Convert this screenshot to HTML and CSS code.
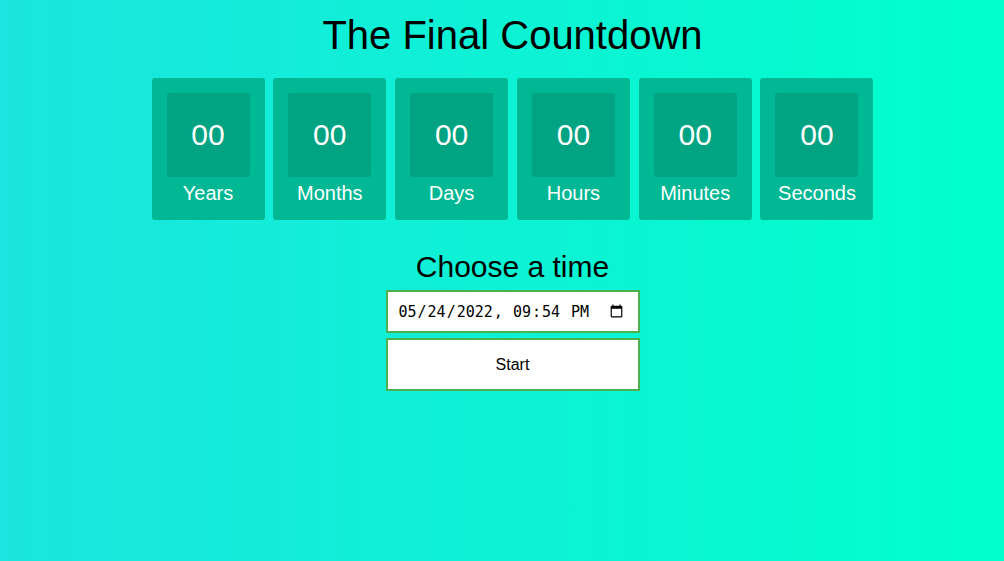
FILE: index.html
```html
<!DOCTYPE html>
<html lang="en">
<head>
<meta charset="utf-8">
<title>The Final Countdown</title>
<link rel="stylesheet" href="styles.css">
</head>
<body>
<main class="page">
  <h1 class="title">The Final Countdown</h1>
  <section class="timer">
    <div class="unit"><div class="value">00</div><div class="label">Years</div></div>
    <div class="unit"><div class="value">00</div><div class="label">Months</div></div>
    <div class="unit"><div class="value">00</div><div class="label">Days</div></div>
    <div class="unit"><div class="value">00</div><div class="label">Hours</div></div>
    <div class="unit"><div class="value">00</div><div class="label">Minutes</div></div>
    <div class="unit"><div class="value">00</div><div class="label">Seconds</div></div>
  </section>
  <section class="chooser">
    <h2 class="subtitle">Choose a time</h2>
    <input class="date-input" type="datetime-local" value="2022-05-24T21:54">
    <button class="start-btn" type="button">Start</button>
  </section>
</main>
</body>
</html>
```
FILE: styles.css
```css
html, body {
  margin: 0;
  padding: 0;
  height: 100%;
}
body {
  background: linear-gradient(to right, #1ae5de, #00ffcc);
  font-family: "Liberation Sans", Arial, sans-serif;
  color: #000;
}
.page {
  display: flex;
  flex-direction: column;
  align-items: center;
  padding-left: 21px;
}
.title {
  margin: 12px 0 0;
  font-size: 40px;
  font-weight: normal;
  line-height: 46px;
}
.timer {
  display: flex;
  gap: 8.8px;
  margin-top: 20px;
}
.unit {
  width: 113px;
  box-sizing: border-box;
  padding: 15px 15px 15px;
  background: #00b894;
  border-radius: 3px;
  display: flex;
  flex-direction: column;
  align-items: center;
}
.value {
  width: 83px;
  height: 84px;
  background: #00a382;
  border-radius: 2px;
  display: flex;
  align-items: center;
  justify-content: center;
  color: #fff;
  font-size: 30px;
}
.label {
  margin-top: 5px;
  color: #fff;
  font-size: 20px;
  line-height: 23px;
}
.chooser {
  display: flex;
  flex-direction: column;
  align-items: center;
  margin-top: 29px;
}
.subtitle {
  margin: 0 0 6px;
  font-size: 30px;
  font-weight: normal;
  line-height: 35px;
}
.date-input {
  width: 254px;
  height: 43px;
  box-sizing: border-box;
  border: 2px solid #4caf50;
  background: #fff;
  padding: 0 12px 0 10px;
  font-family: "DejaVu Sans Mono", monospace;
  font-size: 15px;
  color: #000;
  margin: 0;
}
.start-btn {
  margin-top: 5px;
  width: 254px;
  height: 53px;
  box-sizing: border-box;
  border: 2px solid #4caf50;
  background: #fff;
  font-family: "Liberation Sans", Arial, sans-serif;
  font-size: 16px;
  color: #000;
  padding: 0;
}
```
